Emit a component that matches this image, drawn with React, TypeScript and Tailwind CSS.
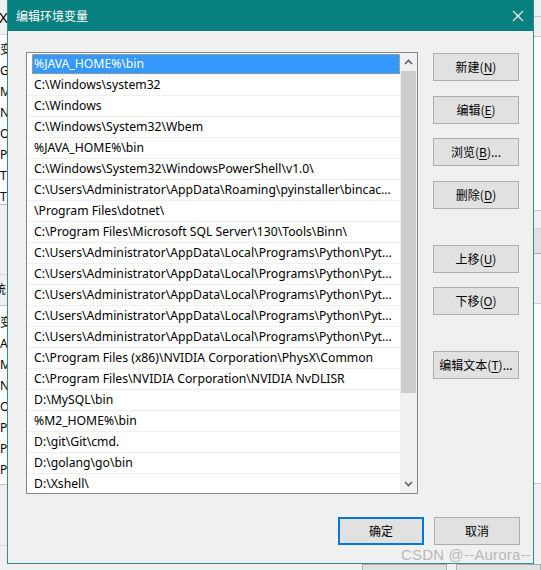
import React from "react";

const paths: string[] = [
  "%JAVA_HOME%\\bin",
  "C:\\Windows\\system32",
  "C:\\Windows",
  "C:\\Windows\\System32\\Wbem",
  "%JAVA_HOME%\\bin",
  "C:\\Windows\\System32\\WindowsPowerShell\\v1.0\\",
  "C:\\Users\\Administrator\\AppData\\Roaming\\pyinstaller\\bincac...",
  "\\Program Files\\dotnet\\",
  "C:\\Program Files\\Microsoft SQL Server\\130\\Tools\\Binn\\",
  "C:\\Users\\Administrator\\AppData\\Local\\Programs\\Python\\Pyt...",
  "C:\\Users\\Administrator\\AppData\\Local\\Programs\\Python\\Pyt...",
  "C:\\Users\\Administrator\\AppData\\Local\\Programs\\Python\\Pyt...",
  "C:\\Users\\Administrator\\AppData\\Local\\Programs\\Python\\Pyt...",
  "C:\\Users\\Administrator\\AppData\\Local\\Programs\\Python\\Pyt...",
  "C:\\Program Files (x86)\\NVIDIA Corporation\\PhysX\\Common",
  "C:\\Program Files\\NVIDIA Corporation\\NVIDIA NvDLISR",
  "D:\\MySQL\\bin",
  "%M2_HOME%\\bin",
  "D:\\git\\Git\\cmd.",
  "D:\\golang\\go\\bin",
  "D:\\Xshell\\",
];

const UI_FONT = "font-['Segoe_UI','Noto_Sans','Noto_Sans_CJK_SC',sans-serif]";

function WinButton({
  label,
  accel,
  suffix,
  primary,
  className,
}: {
  label: string;
  accel?: string;
  suffix?: string;
  primary?: boolean;
  className?: string;
}) {
  return (
    <div
      className={`h-[28px] w-[86px] flex items-center justify-center bg-[#e1e1e1] text-[12px] text-black ${
        primary ? "border-2 border-[#0078d7]" : "border border-[#adadad]"
      } ${className ?? ""}`}
    >
      <span>
        {label}
        {accel && (
          <>
            (<span className="underline underline-offset-2">{accel}</span>)
          </>
        )}
        {suffix}
      </span>
    </div>
  );
}

function Chevron({ down }: { down?: boolean }) {
  return (
    <svg width="9" height="6" viewBox="0 0 9 6" className="block">
      <polyline
        points={down ? "1,1 4.5,4.5 8,1" : "1,5 4.5,1.5 8,5"}
        fill="none"
        stroke="#606060"
        strokeWidth="1.6"
      />
    </svg>
  );
}

function LeftStrip() {
  const top = ["变", "G", "M", "N", "O", "Pa", "TE", "TM"];
  const bottom = ["变", "A", "M", "N", "O", "Pa", "PA", "PR"];
  return (
    <div className="w-[7px] shrink-0 overflow-hidden flex flex-col text-[12px] text-black">
      <div className="h-[35px] flex items-center border-b border-[#d9d9d9]">
        <span className="-ml-[1px] text-[15px]">X</span>
      </div>
      <div className="h-[170px] bg-white pt-[4px] border-b border-[#bcbcbc]">
        {top.map((t, i) => (
          <div key={i} className="h-[21px] leading-[21px] whitespace-nowrap">
            {t}
          </div>
        ))}
      </div>
      <div className="h-[70px] border-b border-[#d9d9d9]" />
      <div className="h-[30px] flex items-center whitespace-nowrap">
        <span className="-ml-[6px]">统</span>
      </div>
      <div className="h-[180px] bg-white pt-[6px] border-y border-[#bcbcbc]">
        {bottom.map((t, i) => (
          <div key={i} className="h-[21px] leading-[21px] whitespace-nowrap">
            {t}
          </div>
        ))}
      </div>
      <div className="h-[61px] border-b border-[#d9d9d9]" />
    </div>
  );
}

function RightStrip() {
  return (
    <div className="w-[7px] shrink-0 overflow-hidden flex flex-col">
      <div className="h-[17px] border-b border-[#c8c8c8]" />
      <div className="h-[19px]" />
      <div className="h-[175px] bg-white border-y border-[#c8c8c8]" />
      <div className="h-[18px] border-b border-[#d0d0d0]" />
      <div className="h-[25px] bg-[#e1e1e1] border-b border-[#adadad]" />
      <div className="h-[50px] border-b border-[#d0d0d0]" />
      <div className="h-[180px] bg-white border-b border-[#c8c8c8]" />
      <div className="flex-1" />
    </div>
  );
}

export default function App() {
  return (
    <div className={`w-[541px] h-[570px] bg-[#f0f0f0] overflow-hidden relative ${UI_FONT}`}>
      <div className="flex h-[564px]">
        <LeftStrip />

        {/* dialog */}
        <div className="w-[527px] shrink-0 flex flex-col border border-t-0 border-[#2a8f8f] bg-[#f0f0f0]">
          <div className="h-[31px] bg-[#088080] flex items-center justify-between pl-[8px] pr-[8px] text-white">
            <span className="text-[12px] font-['Noto_Sans_CJK_SC',sans-serif]">编辑环境变量</span>
            <svg width="12" height="12" viewBox="0 0 12 12" className="mr-[1px]">
              <path d="M1 1 L11 11 M11 1 L1 11" stroke="white" strokeWidth="1.2" />
            </svg>
          </div>

          <div className="flex-1 flex flex-col pl-[18px] pr-[13px] pt-[21px]">
            <div className="flex">
              {/* list box */}
              <div className="w-[392px] h-[442px] border border-[#828790] bg-white flex overflow-hidden">
                <div className="flex-1 min-w-0 pt-[1px] font-['Segoe_UI','Noto_Sans',sans-serif] text-[12.2px] text-black">
                  {paths.map((p, i) => (
                    <div
                      key={i}
                      className="h-[21px] border-b border-[#f0f0f0] pl-[5px] flex items-center"
                    >
                      <div
                        className={`w-full h-[20px] flex items-center pl-[2px] pr-[1px] min-w-0 ${
                          i === 0
                            ? "bg-[#3399ff] text-white outline outline-1 outline-dotted outline-[#f5a04a] -outline-offset-1"
                            : ""
                        }`}
                      >
                        <span className="whitespace-nowrap overflow-hidden leading-[20px]">{p}</span>
                      </div>
                    </div>
                  ))}
                </div>
                {/* scrollbar */}
                <div className="w-[17px] shrink-0 bg-[#f0f0f0] flex flex-col">
                  <div className="h-[18px] flex items-center justify-center">
                    <Chevron />
                  </div>
                  <div className="h-[322px] mx-[1px] bg-[#cdcdcd]" />
                  <div className="flex-1" />
                  <div className="h-[18px] flex items-center justify-center">
                    <Chevron down />
                  </div>
                </div>
              </div>

              {/* side buttons */}
              <div className="ml-[15px] flex flex-col font-['Noto_Sans_CJK_SC',sans-serif]">
                <WinButton label="新建" accel="N" className="mt-[1px]" />
                <WinButton label="编辑" accel="E" className="mt-[15px]" />
                <WinButton label="浏览" accel="B" suffix="..." className="mt-[14px]" />
                <WinButton label="删除" accel="D" className="mt-[15px]" />
                <WinButton label="上移" accel="U" className="mt-[36px]" />
                <WinButton label="下移" accel="O" className="mt-[14px]" />
                <WinButton label="编辑文本" accel="T" suffix="..." className="mt-[36px]" />
              </div>
            </div>

            <div className="flex justify-end gap-[10px] mt-[23px] font-['Noto_Sans_CJK_SC',sans-serif]">
              <WinButton label="确定" primary />
              <WinButton label="取消" />
            </div>
          </div>
        </div>

        <RightStrip />
      </div>

      {/* strip of the window behind, below the dialog */}
      <div className="flex h-[6px]">
        <div className="w-[368px]" />
        <div className="w-[86px] bg-[#e1e1e1] border-x border-t border-[#adadad]" />
        <div className="w-[10px]" />
        <div className="w-[86px] bg-[#e1e1e1] border-x border-t border-[#adadad]" />
      </div>

      {/* watermark */}
      <div className="absolute right-[10px] bottom-[8px] text-[15px] leading-[15px] text-[#a8a8a8]/80 font-['Liberation_Sans',sans-serif] tracking-[0.2px]">
        CSDN @--Aurora--
      </div>
    </div>
  );
}
